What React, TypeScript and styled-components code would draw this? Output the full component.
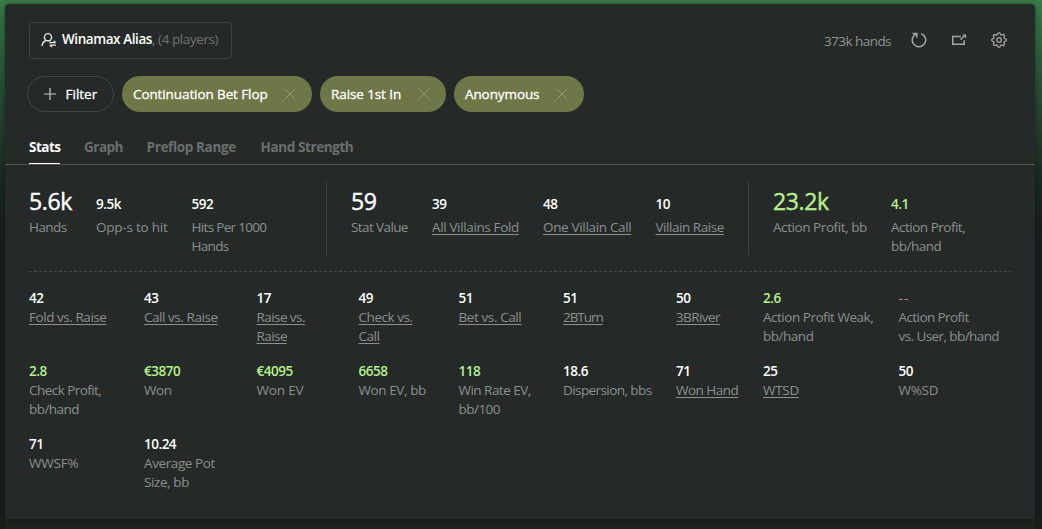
import React from 'react';
import styled, { createGlobalStyle, css } from 'styled-components';

const Global = createGlobalStyle`
  * { box-sizing: border-box; }
  body {
    margin: 0;
    background: #191e1e;
    font-family: 'Open Sans', 'Noto Sans', sans-serif;
    font-size: 13.5px;
    line-height: 19px;
    color: #fff;
  }
  button { font: inherit; color: inherit; background: none; border: 0; padding: 0; margin: 0; }
`;

const Page = styled.div`
  height: 529px;
  padding: 4px 7px 0 5px;
  overflow: hidden;
  background:
    linear-gradient(180deg, #397b48 0, #316f40 20px, #275134 80px, #213d2b 130px, #1a2722 180px, #191d1e 240px, #191d1e 100%);
`;

const Panel = styled.main`
  height: 515px;
  background: #252a29;
  border-radius: 4px 4px 0 0;
  box-shadow: 0 0 5px rgba(0, 0, 0, 0.35), 0 10px 0 #1d231f;
`;

const Header = styled.header`
  display: flex;
  justify-content: space-between;
  padding: 18px 27px 0 24px;
`;

const AliasBox = styled.button`
  display: flex;
  align-items: center;
  width: 203px;
  height: 37px;
  padding-left: 11px;
  padding-bottom: 2px;
  border: 1px solid #3c4140;
  border-radius: 4px;
  white-space: nowrap;
  svg { margin-right: 5px; }
`;

const Copy = styled.span<{ $track?: number; $tone?: string; $weight?: number }>`
  letter-spacing: ${(p) => p.$track ?? 0}px;
  ${(p) => p.$tone && css`color: ${p.$tone};`}
  ${(p) => p.$weight && css`font-weight: ${p.$weight};`}
  white-space: pre;
`;

const Tools = styled.div`
  display: flex;
  align-items: center;
  height: 36px;
  color: #a3a6a4;
`;

const HandCount = styled.span`
  margin-right: 19px;
  padding-top: 2px;
  letter-spacing: -0.55px;
  color: #8f9391;
`;

const ToolButton = styled.button<{ $gap?: number }>`
  display: flex;
  width: 18px;
  justify-content: center;
  margin-right: ${(p) => p.$gap ?? 0}px;
`;

const Filters = styled.div`
  display: flex;
  gap: 8px;
  padding: 18px 0 0 22px;
  margin-top: -1px;
`;

const Pill = styled.button<{ $width: number; $filled?: boolean }>`
  display: flex;
  align-items: center;
  width: ${(p) => p.$width}px;
  height: 36px;
  border-radius: 18px;
  white-space: nowrap;
  -webkit-text-stroke: 0.3px currentColor;
  ${(p) =>
    p.$filled
      ? css`justify-content: space-between; padding: 0 16px 0 11px; background: #6f7647;`
      : css`gap: 8.5px; padding-left: 15px; border: 1px solid #414645;`}
`;

const Tabs = styled.nav`
  display: flex;
  gap: 24px;
  height: 53px;
  padding: 0 24px;
  border-bottom: 1px solid #515655;
`;

const Tab = styled.button<{ $width: number; $active?: boolean; $track: number }>`
  width: ${(p) => p.$width}px;
  height: 52px;
  padding-top: 19px;
  font-weight: 700;
  text-align: left;
  white-space: nowrap;
  letter-spacing: ${(p) => p.$track}px;
  color: ${(p) => (p.$active ? '#fff' : '#6a6e6d')};
  border-bottom: 1px solid ${(p) => (p.$active ? '#fff' : 'transparent')};
`;

const Body = styled.section`
  padding: 16px 24px 0;
`;

const Summary = styled.div`
  display: flex;
  height: 90px;
`;

const Group = styled.div<{ $columns: string; $width: number; $divided?: boolean }>`
  display: grid;
  grid-template-columns: ${(p) => p.$columns};
  width: ${(p) => p.$width}px;
  height: 74px;
  margin-right: 24px;
  flex: none;
  padding-top: 5px;
  ${(p) => p.$divided && css`border-right: 1px solid #3d4241;`}
`;

const DashedLine = styled.div`
  width: 982px;
  height: 1px;
  background: repeating-linear-gradient(90deg, #434847 0 3px, transparent 3px 5px);
`;

const Grid = styled.div`
  display: grid;
  grid-template-columns: 115px 112.5px 102px 100px 104.5px 113px 87px 135.5px 112px;
  grid-auto-rows: 73px;
  padding-top: 17px;
`;

const Cell = styled.div`
  display: flex;
  flex-direction: column;
  align-items: flex-start;
`;

const Value = styled.strong<{ $big?: boolean; $tone?: string; $lead?: boolean; $loose?: boolean }>`
  display: flex;
  align-items: flex-end;
  height: ${(p) => (p.$lead ? 32 : 19)}px;
  padding-bottom: ${(p) => (p.$lead && !p.$big ? 4 : 0)}px;
  font-size: ${(p) => (p.$big ? 23 : 13.5)}px;
  font-weight: ${(p) => (p.$big || p.$loose ? 400 : 600)};
  line-height: ${(p) => (p.$big ? 34 : 19)}px;
  letter-spacing: ${(p) => (p.$big ? -0.4 : p.$loose ? 1.2 : -0.5)}px;
  color: ${(p) => p.$tone ?? '#fff'};
  ${(p) => p.$big && css`-webkit-text-stroke: 0.4px currentColor;`}
`;

const Label = styled.span<{ $track: number; $link?: boolean }>`
  color: #8b8f8d;
  white-space: pre;
  letter-spacing: ${(p) => p.$track}px;
  ${(p) => p.$link && css`text-decoration: underline; text-underline-offset: 2px; text-decoration-thickness: 1px;`}
`;

type Item = { value: string; label: string; link?: boolean; tone?: string; track?: number; big?: boolean };
const GREEN = '#b5f08b';
const RED = '#d9877a';

const Stat = ({ item, lead }: { item: Item; lead?: boolean }) => (
  <Cell>
    <Value $big={item.big} $tone={item.tone} $lead={lead} $loose={item.value === '--'}>{item.value}</Value>
    <Label $track={item.track ?? -0.3} $link={item.link}>{item.label}</Label>
  </Cell>
);

const groups: { columns: string; width: number; divided?: boolean; items: Item[] }[] = [
  {
    columns: '67px 95.5px 1fr', width: 298, divided: true,
    items: [
      { value: '5.6k', label: 'Hands', big: true, track: -0.55 },
      { value: '9.5k', label: 'Opp-s to hit', track: -0.22 },
      { value: '592', label: 'Hits Per 1000\nHands', track: -0.68 },
    ],
  },
  {
    columns: '81px 111px 112.5px 1fr', width: 398, divided: true,
    items: [
      { value: '59', label: 'Stat Value', big: true, track: -0.6 },
      { value: '39', label: 'All Villains Fold', link: true, track: -0.36 },
      { value: '48', label: 'One Villain Call', link: true, track: -0.33 },
      { value: '10', label: 'Villain Raise', link: true, track: -0.45 },
    ],
  },
  {
    columns: '118px 1fr', width: 238,
    items: [
      { value: '23.2k', label: 'Action Profit, bb', big: true, tone: GREEN, track: -0.43 },
      { value: '4.1', label: 'Action Profit,\nbb/hand', tone: GREEN, track: -0.5 },
    ],
  },
];

const stats: Item[] = [
  { value: '42', label: 'Fold vs. Raise', link: true, track: -0.45 },
  { value: '43', label: 'Call vs. Raise', link: true, track: -0.45 },
  { value: '17', label: 'Raise vs.\nRaise', link: true, track: -0.57 },
  { value: '49', label: 'Check vs.\nCall', link: true, track: -0.45 },
  { value: '51', label: 'Bet vs. Call', link: true, track: -0.4 },
  { value: '51', label: '2BTurn', link: true, track: -1.05 },
  { value: '50', label: '3BRiver', link: true, track: -0.6 },
  { value: '2.6', label: 'Action Profit Weak,\nbb/hand', tone: GREEN, track: -0.48 },
  { value: '--', label: 'Action Profit\nvs. User, bb/hand', tone: RED, track: -0.58 },
  { value: '2.8', label: 'Check Profit,\nbb/hand', tone: GREEN, track: -0.55 },
  { value: '€3870', label: 'Won', tone: GREEN, track: -0.45 },
  { value: '€4095', label: 'Won EV', tone: GREEN, track: -0.15 },
  { value: '6658', label: 'Won EV, bb', tone: GREEN, track: -0.4 },
  { value: '118', label: 'Win Rate EV,\nbb/100', tone: GREEN, track: -0.52 },
  { value: '18.6', label: 'Dispersion, bbs', track: -0.58 },
  { value: '71', label: 'Won Hand', link: true, track: -0.5 },
  { value: '25', label: 'WTSD', link: true },
  { value: '50', label: 'W%SD' },
  { value: '71', label: 'WWSF%', track: -0.2 },
  { value: '10.24', label: 'Average Pot\nSize, bb', track: -0.4 },
];

const AliasIcon = () => (
  <svg width="16" height="16" viewBox="0 0 16 16" fill="none" stroke="#e4e6e5" strokeWidth="1.4">
    <circle cx="7" cy="5.2" r="3.6" />
    <path d="M1 14c.3-2.800 1.800-4.600 4-5.500M8.500 8.700h1.200" />
    <path d="M8.300 10.700h6.200M12.500 8.600l2.200 2.100M15 13.100H8.700M11 15.100l-2.200-2" strokeWidth="1.300" />
  </svg>
);

const ReloadIcon = () => (
  <svg width="16" height="16" viewBox="0 0 16 16" fill="none" stroke="currentColor" strokeWidth="1.5">
    <path d="M10.200 1.700A6.700 6.700 0 1 1 5.500 1.800" />
    <path d="M1.500 1.500h4.300v4.200" />
  </svg>
);

const PopOutIcon = () => (
  <svg width="16" height="14" viewBox="0 0 16 14" fill="none" stroke="currentColor" strokeWidth="1.5">
    <path d="M10 3.500H1.700v7.800h11.500V7.200" />
    <path d="M9.600 6.600l3.400-3.400" />
    <path d="M11.200 1.500h4v4z" fill="currentColor" stroke="none" />
  </svg>
);

const gearOutline = Array.from({ length: 64 }, (_, i) => {
  const a = (i / 64) * Math.PI * 2;
  const r = 6.4 + 0.8 * Math.max(-1, Math.min(1, 1.5 * Math.cos(8 * a)));
  return `${(8 + r * Math.cos(a)).toFixed(2)},${(8 + r * Math.sin(a)).toFixed(2)}`;
}).join(' ');

const GearIcon = () => (
  <svg width="16" height="16" viewBox="0 0 16 16" fill="none" stroke="currentColor" strokeWidth="1.3">
    <polygon points={gearOutline} strokeLinejoin="round" />
    <circle cx="8" cy="8" r="2.3" />
  </svg>
);

const PlusIcon = () => (
  <svg width="14" height="14" viewBox="0 0 14 14" stroke="#c6c8c7" strokeWidth="1.2"><path d="M7 1v12M1 7h12" /></svg>
);

const CloseIcon = () => (
  <svg width="12" height="12" viewBox="0 0 12 12" stroke="#969b79" strokeWidth="1"><path d="M.7.7l10.600 10.600M11.300.7L.7 11.300" /></svg>
);

export default function App() {
  return (
    <>
      <Global />
      <Page>
        <Panel>
          <Header>
            <AliasBox>
              <AliasIcon />
              <Copy $weight={600} $track={-0.42}>Winamax Alias</Copy>
              <Copy $tone="#6f7371" $track={-0.43}>, (4 players)</Copy>
            </AliasBox>
            <Tools>
              <HandCount>373k hands</HandCount>
              <ToolButton $gap={22}><ReloadIcon /></ToolButton>
              <ToolButton $gap={22}><PopOutIcon /></ToolButton>
              <ToolButton><GearIcon /></ToolButton>
            </Tools>
          </Header>
          <Filters>
            <Pill $width={87}><PlusIcon /><Copy>Filter</Copy></Pill>
            <Pill $width={190} $filled><Copy $track={-0.1}>Continuation Bet Flop</Copy><CloseIcon /></Pill>
            <Pill $width={126} $filled><Copy $track={-0.1}>Raise 1st In</Copy><CloseIcon /></Pill>
            <Pill $width={130} $filled><Copy $track={-0.1}>Anonymous</Copy><CloseIcon /></Pill>
          </Filters>
          <Tabs>
            <Tab $width={31} $track={-0.5} $active>Stats</Tab>
            <Tab $width={38.5} $track={-0.5}>Graph</Tab>
            <Tab $width={90} $track={-0.35}>Preflop Range</Tab>
            <Tab $width={93} $track={-0.4}>Hand Strength</Tab>
          </Tabs>
          <Body>
            <Summary>
              {groups.map((g) => (
                <Group key={g.columns} $columns={g.columns} $width={g.width} $divided={g.divided}>
                  {g.items.map((item) => <Stat key={item.label} item={item} lead />)}
                </Group>
              ))}
            </Summary>
            <DashedLine />
            <Grid>
              {stats.map((item) => <Stat key={item.label} item={item} />)}
            </Grid>
          </Body>
        </Panel>
      </Page>
    </>
  );
}
